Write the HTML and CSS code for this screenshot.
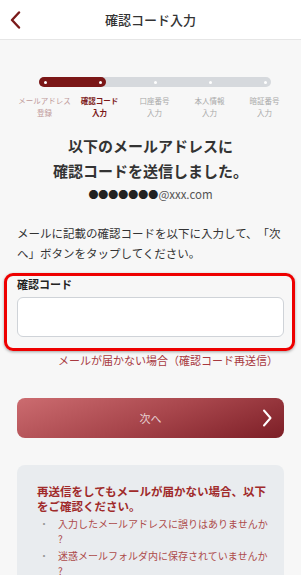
FILE: index.html
```html
<!DOCTYPE html>
<html lang="ja">
<head>
    <meta name="viewport" content="width=device-width, initial-scale=1.0">
    <title>確認コード入力</title>
    <link rel="stylesheet" href="styles.css">
</head>
<body>
    <header class="top-bar">
        <a class="back" href="#">
            <svg width="12" height="18" viewBox="0 0 12 18"><path d="M10 1.5 L3 9 L10 16.5" fill="none" stroke="#7a1a1a" stroke-width="2.4" stroke-linecap="round" stroke-linejoin="round"/></svg>
        </a>
        <h1 class="title">確認コード入力</h1>
        <span></span>
    </header>

    <main class="content">
        <!-- Progress steps -->
        <div class="steps">
            <div class="bar">
                <div class="bar-fill"></div>
                <div class="bar-dots">
                    <i></i><i></i><i></i><i></i><i></i>
                </div>
            </div>
            <ol class="step-labels">
                <li class="done">メールアドレス<br>登録</li>
                <li class="current">確認コード<br>入力</li>
                <li>口座番号<br>入力</li>
                <li>本人情報<br>入力</li>
                <li>暗証番号<br>入力</li>
            </ol>
        </div>

        <h2 class="lead">以下のメールアドレスに<br>確認コードを送信しました。</h2>
        <p class="email"><span class="mask">●●●●●●●</span>@xxx.com</p>

        <p class="note">メールに記載の確認コードを以下に入力して、「次へ」ボタンをタップしてください。</p>

        <div class="field highlight">
            <label for="code">確認コード</label>
            <input type="text" id="code" inputmode="numeric">
        </div>

        <p class="resend"><a href="#">メールが届かない場合（確認コード再送信）</a></p>

        <button class="next-button">
            <span>次へ</span>
            <svg width="10" height="18" viewBox="0 0 10 18"><path d="M2 1.5 L8.5 9 L2 16.5" fill="none" stroke="#fff" stroke-width="2" stroke-linecap="round" stroke-linejoin="round"/></svg>
        </button>

        <section class="help">
            <h3>再送信をしてもメールが届かない場合、以下をご確認ください。</h3>
            <ul>
                <li><span class="dot">・</span><span>入力したメールアドレスに誤りはありませんか?</span></li>
                <li><span class="dot">・</span><span>迷惑メールフォルダ内に保存されていませんか?</span></li>
            </ul>
        </section>
    </main>
</body>
</html>
```

FILE: styles.css
```css
body {
    margin: 0;
    padding: 0;
    background: #f7f7f7;
    font-family: "Noto Sans CJK JP", "Noto Sans", sans-serif;
    color: #333;
    text-spacing-trim: space-all;
}
.top-bar {
    display: grid;
    grid-template-columns: 40px 1fr 40px;
    align-items: center;
    height: 39px;
    background: #fff;
    border-bottom: 1px solid #e6e6e6;
}
.back {
    display: flex;
    padding-left: 9px;
}
.title {
    margin: 0;
    text-align: center;
    font-size: 13px;
    font-weight: 500;
    color: #333;
}
.content {
    padding: 0 17px 20px;
}
.steps {
    width: 275px;
    padding-top: 37px;
}
.bar {
    display: grid;
    width: 232px;
    height: 10px;
    margin-left: 22px;
    border-radius: 5px;
    background: #d6d9dd;
}
.bar-fill,
.bar-dots {
    grid-area: 1 / 1;
}
.bar-fill {
    width: 67px;
    border-radius: 5px;
    background: #7b1717;
}
.bar-dots {
    display: flex;
    justify-content: space-between;
    align-items: center;
    padding: 0 4.5px;
}
.bar-dots i {
    width: 3px;
    height: 3px;
    border-radius: 50%;
    background: #fff;
}
.step-labels {
    display: grid;
    grid-template-columns: repeat(5, 55px);
    margin: 8px 0 0;
    padding: 0;
    list-style: none;
    font-size: 7.5px;
    line-height: 12px;
    text-align: center;
    color: #a9a9a9;
}
.step-labels .done {
    color: #bf9a9a;
}
.step-labels .current {
    color: #7b1717;
    font-weight: bold;
}
.lead {
    margin: 14px 0 0;
    text-align: center;
    font-size: 15px;
    line-height: 25px;
    font-weight: bold;
    color: #333;
}
.email {
    margin: 3px 0 0;
    text-align: center;
    font-size: 11.5px;
    line-height: 16px;
    color: #555;
}
.email .mask {
    font-size: 10px;
    color: #222;
}
.note {
    margin: 20px 0 0;
    font-size: 11.5px;
    line-height: 20px;
    color: #333;
}
.field {
    margin: 10px -11px 0 -13px;
    padding: 1px 8px 11px 10px;
}
.highlight {
    border: 3px solid #ee0000;
    border-radius: 9px;
    box-shadow: 0 1px 3px rgba(0, 0, 0, 0.35);
}
.field label {
    display: block;
    font-size: 11px;
    line-height: 14px;
    font-weight: bold;
    color: #222;
}
.field input {
    display: block;
    box-sizing: border-box;
    width: 100%;
    height: 40px;
    margin-top: 6px;
    border: 1px solid #cfd3d8;
    border-radius: 6px;
    background: #fff;
}
.resend {
    margin: 1px 0 0;
    padding-right: 6px;
    text-align: right;
    font-size: 11px;
    line-height: 16px;
}
.resend a {
    color: #a8393f;
    text-decoration: none;
}
.next-button {
    -webkit-appearance: none;
    display: flex;
    align-items: center;
    justify-content: space-between;
    width: 100%;
    height: 40px;
    margin-top: 30px;
    padding: 0 12px 0 0;
    border: none;
    border-radius: 8px;
    background: linear-gradient(160deg, #cc6c70 0%, #a8464c 50%, #7c1e26 100%);
    font-family: inherit;
    font-size: 11px;
    color: rgba(255, 255, 255, 0.75);
}
.next-button span {
    flex: 1;
    padding-left: 22px;
    text-align: center;
}
.help {
    margin-top: 27px;
    padding: 19px 16px 12px 20px;
    border-radius: 8px;
    background: #e9ecef;
}
.help h3 {
    margin: 0;
    font-size: 11.5px;
    line-height: 15px;
    font-weight: bold;
    color: #a02a2a;
}
.help ul {
    margin: 2px 0 0;
    padding: 0;
    list-style: none;
    font-size: 10px;
    line-height: 15px;
    color: #ad4a4a;
}
.help li {
    display: flex;
    margin-bottom: 2px;
}
.help .dot {
    flex: none;
    width: 21px;
    padding-left: 2px;
    box-sizing: border-box;
    color: #999;
}
.help li span:last-child {
    line-break: anywhere;
}
```
